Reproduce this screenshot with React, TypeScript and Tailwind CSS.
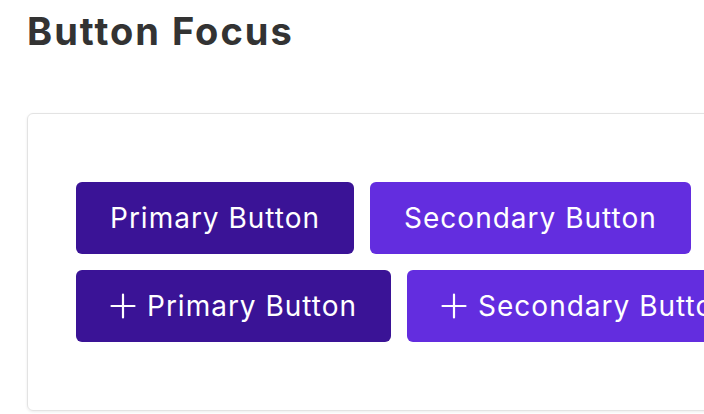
function PlusIcon() {
  return (
    <svg width="26" height="26" viewBox="0 0 26 26" fill="none" stroke="currentColor" strokeWidth={2.2} strokeLinecap="round" className="shrink-0">
      <path d="M13 1.5v23M1.5 13h23" />
    </svg>
  );
}

function Btn({ label, variant, icon }: { label: string; variant: 'primary' | 'secondary'; icon?: boolean }) {
  const bg = variant === 'primary' ? 'bg-[#3a1396]' : 'bg-[#632ddf]';
  return (
    <button className={`${bg} h-[72px] px-[34px] rounded-[6px] text-white text-[28px] tracking-[1px] flex items-center gap-[11px] whitespace-nowrap shrink-0`}>
      {icon && <PlusIcon />}
      {label}
    </button>
  );
}

export default function App() {
  return (
    <div className="w-[704px] h-[414px] overflow-hidden bg-white font-['Inter',sans-serif]">
      <div className="pl-[27px] pt-[9px]">
        <h1 className="text-[38px] font-bold text-[#333333] leading-[44px] tracking-[2px]">Button Focus</h1>
        <div className="mt-[60px] w-[900px] h-[298px] border border-[#e3e3e3] rounded-[6px] shadow-[0_1px_3px_rgba(0,0,0,0.08)] pl-[48px] pt-[68px]">
          <div className="flex flex-col gap-4">
            <div className="flex gap-4">
              <Btn label="Primary Button" variant="primary" />
              <Btn label="Secondary Button" variant="secondary" />
            </div>
            <div className="flex gap-4">
              <Btn label="Primary Button" variant="primary" icon />
              <Btn label="Secondary Button" variant="secondary" icon />
            </div>
          </div>
        </div>
      </div>
    </div>
  );
}
